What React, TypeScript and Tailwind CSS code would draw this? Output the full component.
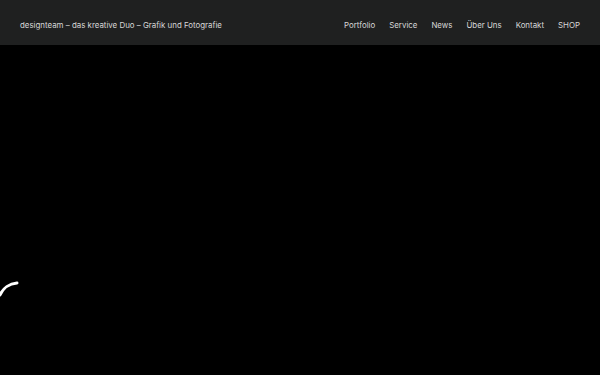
export default function App() {
  const links = ["Portfolio", "Service", "News", "Über Uns", "Kontakt", "SHOP"];

  return (
    <div className="relative h-[375px] w-full overflow-hidden bg-black font-['Inter',sans-serif]">
      <header className="flex h-[45px] items-center justify-between bg-[#1f2020] px-5 pt-[6px]">
        <span className="text-[7.9px] text-[#d8d8d8]">
          designteam – das kreative Duo – Grafik und Fotografie
        </span>
        <nav className="flex gap-[14px]">
          {links.map((l) => (
            <a key={l} className="text-[7.9px] text-[#d8d8d8]">
              {l}
            </a>
          ))}
        </nav>
      </header>

      {/* loader arc */}
      <svg
        className="absolute left-0 top-[278px]"
        width="40"
        height="40"
        viewBox="0 0 40 40"
      >
        <path
          d="M17 5 A20 20 0 0 0 0 17"
          fill="none"
          stroke="white"
          strokeWidth="3"
          strokeLinecap="round"
        />
      </svg>
    </div>
  );
}
